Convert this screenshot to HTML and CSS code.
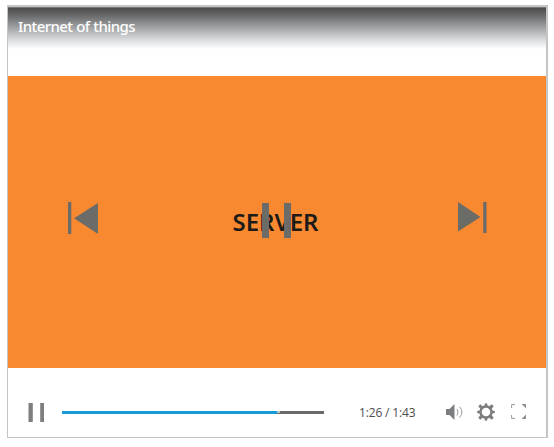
FILE: index.html
```
<!DOCTYPE html>
<html lang="en">
<head>
<meta charset="utf-8">
<title>Internet of things</title>
<link rel="stylesheet" href="styles.css">
</head>
<body>
<main class="player">
  <header class="title">Internet of things</header>
  <section class="stage">
    <svg class="prev" width="31" height="33" viewBox="0 0 31 33"><path d="M0 0h3.3v32H0zM30 1v31L6 16.3z"/></svg>
    <div class="center">
      <span class="caption">SERVER</span>
      <svg class="pause" width="29" height="35" viewBox="0 0 29 35"><path d="M0 0h7v35H0zM22 0h7v35h-7z"/></svg>
    </div>
    <svg class="next" width="29" height="32" viewBox="0 0 29 32"><path d="M0 0v29.5L22.5 15zM25.2 0h3.3v31h-3.3z"/></svg>
  </section>
  <footer class="controls">
    <svg class="toggle" width="16" height="19" viewBox="0 0 16 19"><path d="M.5 0h4.3v19H.5zM12.2 0H16v19h-3.8z"/></svg>
    <div class="track"><div class="played"></div><div class="mark"></div></div>
    <span class="time">1:26 / 1:43</span>
    <svg class="volume" width="18" height="18" viewBox="0 0 18 18"><path d="M0 6h3.5L8.5 1v16l-5-5H0z"/><path class="wave" d="M11 6q2.3 3 0 6.5M13.7 3.7q4.4 5.3 0 10.8"/></svg>
    <svg class="gear" width="18" height="18" viewBox="0 0 18 18"><circle cx="9" cy="9" r="5.5"/><path d="M7 4 8.1.2h1.8L11 4zM7 14l1.1 3.8h1.8L11 14zM4 7 .2 8.1v1.8L4 11zM14 7l3.8 1.1v1.8L14 11zM3.8 6.4 1.3 3.2 3.2 1.3l3.2 2.5zM14.2 6.4l2.5-3.2-1.9-1.9-3.2 2.5zM3.8 11.6l-2.5 3.2 1.9 1.9 3.2-2.5zM14.2 11.6l2.5 3.2-1.9 1.9-3.2-2.5z"/></svg>
    <svg class="full" width="15" height="15" viewBox="0 0 15 15"><path d="M.6 4V.6H4M11 .6h3.4V4M14.4 11v3.4H11M4 14.4H.6V11"/><path class="corner" d="M11 .2h3.7v3.6zM14.7 11v3.7H11z"/></svg>
  </footer>
</main>
</body>
</html>
```
FILE: styles.css
```
body {
  margin: 0;
  padding: 5px 6px 9px 7px;
  background: #fff;
}
.player {
  box-sizing: border-box;
  width: 541px;
  height: 433px;
  display: flex;
  flex-direction: column;
  border: solid #c5c5c5;
  border-width: 2px 2px 1px 1px;
}
.title {
  box-sizing: border-box;
  height: 42px;
  margin-bottom: 27px;
  padding: 0 10px 2px;
  border-top: 1px solid #777;
  background: linear-gradient(#4c4c4c, #6b6c6d 20%, #a5a7a9 50%, #d9dbde 78%, #fff);
  color: #fff;
  font: 500 15px/37px "Noto Sans", "Open Sans", sans-serif;
  letter-spacing: -0.6px;
  word-spacing: 0.5px;
  white-space: nowrap;
}
.stage {
  box-sizing: border-box;
  height: 292px;
  display: flex;
  align-items: flex-start;
  justify-content: space-between;
  padding: 126px 59px 0 60px;
  background: #f88930;
  fill: #6b6c68;
}
.center {
  position: relative;
  left: -2px;
  display: flex;
  padding-top: 1px;
  width: 86px;
  justify-content: center;
}
.caption {
  position: absolute;
  top: 3px;
  left: -1px;
  color: #1d1b18;
  font: 600 24px/34px "Noto Sans", sans-serif;
  letter-spacing: 0;
}
.pause {
  position: relative;
}
.controls {
  flex: 1;
  display: flex;
  align-items: flex-start;
  padding: 35px 19px 0 20px;
  fill: #7c7e7f;
}
.controls > * {
  flex: none;
}
.track {
  width: 262px;
  height: 3px;
  display: flex;
  margin: 8px 35px 0 18px;
  background: #6a6a6a;
}
.played {
  width: 215px;
  background: #169bd7;
}
.mark {
  width: 3px;
  height: 2px;
  background: #b5c5c9;
}
.time {
  width: 60px;
  margin-right: 27px;
  color: #4c4c4c;
  font: 12px/19px "Open Sans", sans-serif;
  letter-spacing: -0.15px;
  white-space: nowrap;
}
.wave {
  fill: none;
  stroke: #999;
}
.gear {
  margin: 0 16px 0 13px;
}
.gear circle {
  fill: none;
  stroke: #7c7e7f;
  stroke-width: 2.4;
}
.full {
  margin-top: 1px;
  fill: none;
  stroke: #999;
}
.corner {
  fill: #858585;
  stroke: none;
}
```
